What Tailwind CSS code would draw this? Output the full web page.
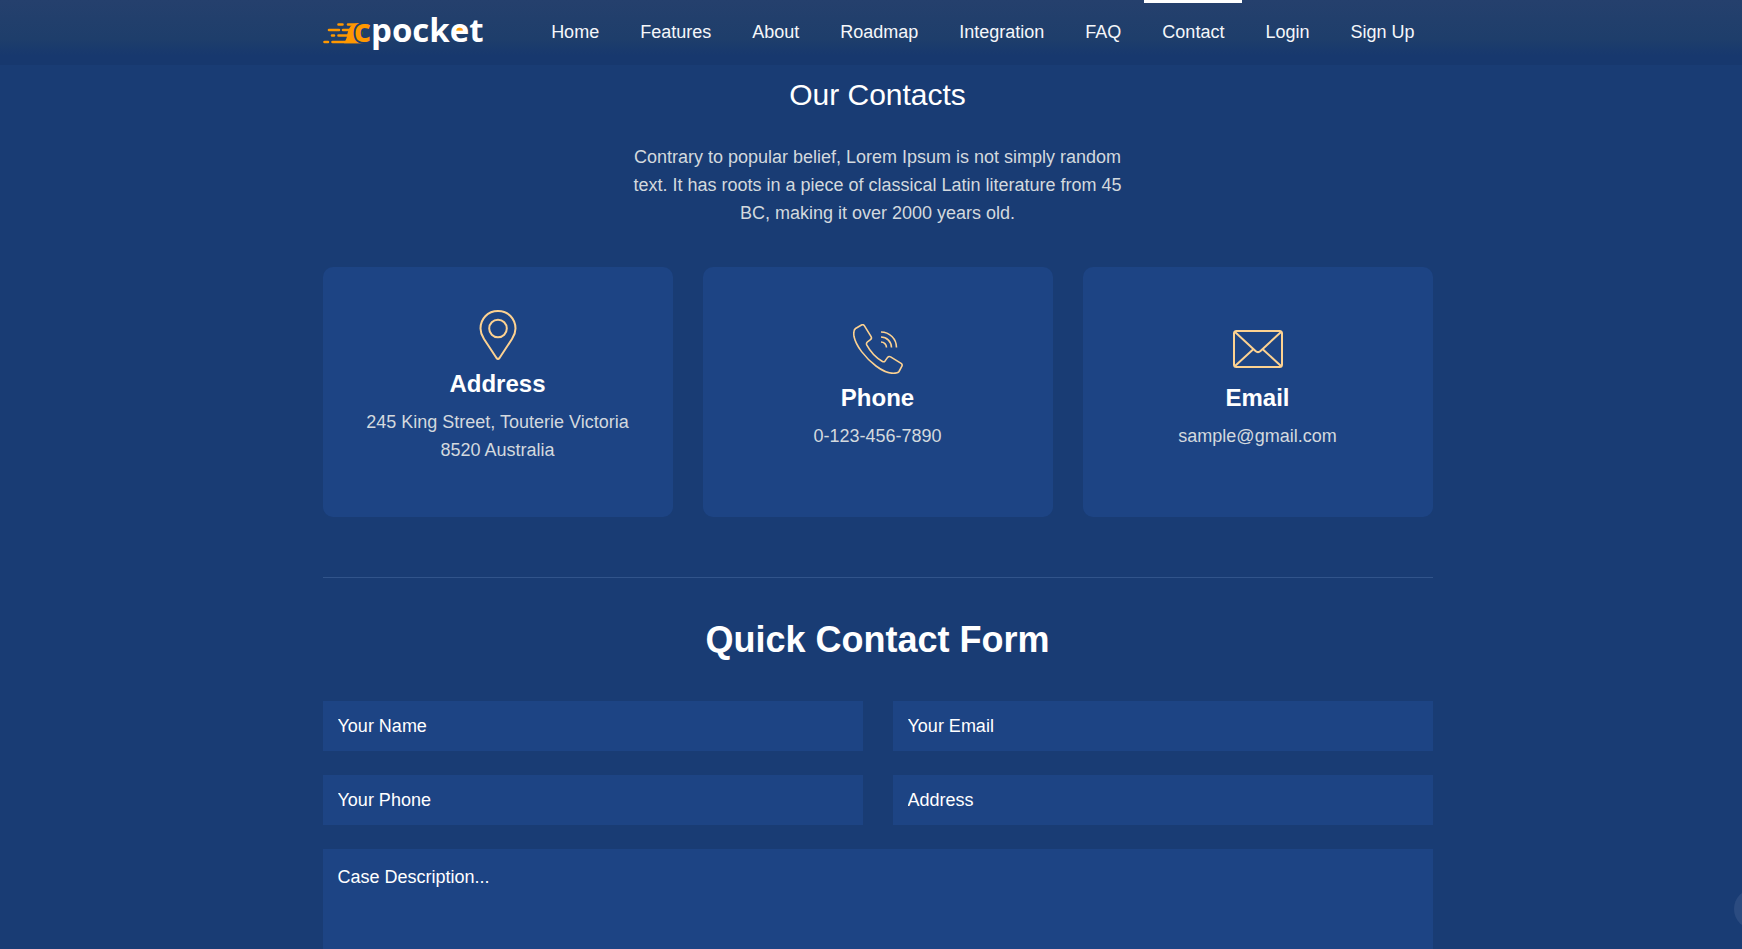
<!DOCTYPE html>
<html lang="en">
<head>
<meta charset="utf-8">
<meta name="viewport" content="width=device-width, initial-scale=1">
<title>cpocket – Contact</title>
<script src="https://cdn.jsdelivr.net/npm/@tailwindcss/browser@4"></script>
</head>
<body class="overflow-x-hidden bg-[#193c74] font-['Liberation_Sans',Arial,sans-serif] text-lg text-white">

<header class="fixed inset-x-0 top-0 z-10 bg-linear-to-b from-[#25406d] via-[#1e3e6b] via-60% to-[#17386e] to-85% pl-[13px]">
  <div class="mx-auto flex h-[65px] max-w-[1140px] items-center justify-between px-[15px]">
    <a href="#" aria-label="cpocket" class="block">
      <svg width="168" height="60" viewBox="0 -10 168 60" font-family="'Open Sans','Noto Sans',sans-serif" font-weight="700">
        <g stroke="#ff9800" stroke-linecap="round" stroke-width="2.6" fill="none">
          <path d="M15.500 11.500h4M25 11.500h12M6 17h10M20 17h14M9 22.500h2M15.500 22.500h14M1.500 29h3.500M9.500 29h28"/>
        </g>
        <path d="M40 10.200H34Q28 11 26 16T24 23T21 30.300H40z" fill="#ff9800"/>
        <text x="31" y="29" font-size="33" fill="#ff9800" stroke="#1f3e6c" stroke-width="4" paint-order="stroke">c</text>
        <path d="M131 18.500q1-6.500 6-6.500t6 6.500z" fill="#ff9800"/>
        <text x="48" y="29" font-size="33" fill="#fff">pocket</text>
      </svg>
    </a>
    <nav class="flex h-full gap-[5px] text-[#f5f7fa]">
      <a href="#" class="flex items-center border-t-3 border-transparent px-[18px] pb-[5px]">Home</a>
      <a href="#" class="flex items-center border-t-3 border-transparent px-[18px] pb-[5px]">Features</a>
      <a href="#" class="flex items-center border-t-3 border-transparent px-[18px] pb-[5px]">About</a>
      <a href="#" class="flex items-center border-t-3 border-transparent px-[18px] pb-[5px]">Roadmap</a>
      <a href="#" class="flex items-center border-t-3 border-transparent px-[18px] pb-[5px]">Integration</a>
      <a href="#" class="flex items-center border-t-3 border-transparent px-[18px] pb-[5px]">FAQ</a>
      <a href="#" aria-current="page" class="flex items-center border-t-3 border-white px-[18px] pb-[5px]">Contact</a>
      <a href="#" class="flex items-center border-t-3 border-transparent px-[18px] pb-[5px]">Login</a>
      <a href="#" class="flex items-center border-t-3 border-transparent px-[18px] pb-[5px]">Sign Up</a>
    </nav>
  </div>
</header>

<main class="pl-[13px]">
  <div class="mx-auto max-w-[1140px] px-[15px] pt-[77px] pb-20">
    <section class="text-center">
      <h1 class="text-3xl leading-9">Our Contacts</h1>
      <p class="mx-auto mt-[30px] max-w-[510px] leading-7 text-[#d3d9de]">Contrary to popular belief, Lorem Ipsum is not simply random text. It has roots in a piece of classical Latin literature from 45 BC, making it over 2000 years old.</p>

      <div class="mt-10 grid grid-cols-3 gap-[30px]">
        <article class="flex min-h-[250px] flex-col items-center justify-center rounded-[10px] bg-[#1d4484] px-[30px]">
          <svg width="50" height="50" viewBox="0 0 50 50" fill="none" stroke="#fdd291" stroke-width="2" stroke-linejoin="round">
            <path d="M25 1C14.500 1 7.500 9 7.500 18.500c0 4 1.500 7.500 3.500 10.500l12.500 19q1.500 1.800 3 0l12.500-19c2-3 3.500-6.500 3.500-10.500C42.500 9 35.500 1 25 1z"/>
            <circle cx="25" cy="18.500" r="8.800"/>
          </svg>
          <h2 class="py-[10px] text-2xl leading-7 font-bold">Address</h2>
          <p class="mb-[10px] max-w-[280px] leading-7 text-[#d3d9de]">245 King Street, Touterie Victoria 8520 Australia</p>
        </article>
        <article class="flex min-h-[250px] flex-col items-center justify-center rounded-[10px] bg-[#1d4484] px-[30px]">
          <svg width="50" height="50" viewBox="0 0 50 50" fill="none" stroke="#fdd291" stroke-width="1.600" stroke-linejoin="round">
            <path d="M2.500 4.500L8.500 1q1.800-.9 2.800.6l6.800 11q1 1.800-.6 3l-3 2.200q-1.500 1.200-.8 3C17 27 22 33 29.500 37.500q1.500.8 2.600-.6l2.500-3.500q1.200-1.500 3-.5l10.500 6.500q1.600 1 .8 2.800L46 47.500q-.6 1-1.800 1.300C38 50.500 31 48 23 42 12 33.500 3 22 1 12.500.5 9 .8 5.800 2.500 4.500z"/>
            <path d="M28 18a5.500 5.500 0 0 1 5.500 5.500M28 13a10.500 10.500 0 0 1 10.500 10.500M28 8a15.500 15.500 0 0 1 15.500 15.500"/>
          </svg>
          <h2 class="py-[10px] text-2xl leading-7 font-bold">Phone</h2>
          <p class="mb-[10px] leading-7 text-[#d3d9de]">0-123-456-7890</p>
        </article>
        <article class="flex min-h-[250px] flex-col items-center justify-center rounded-[10px] bg-[#1d4484] px-[30px]">
          <svg width="50" height="50" viewBox="0 0 50 50" fill="none" stroke="#fdd291" stroke-width="2" stroke-linejoin="round">
            <rect x="1" y="7" width="48" height="36" rx="2.500"/>
            <path d="M2 8l20.500 19q2.500 2.300 5 0L48 8M2 42l18-16.500M48 42L30 25.500"/>
          </svg>
          <h2 class="py-[10px] text-2xl leading-7 font-bold">Email</h2>
          <p class="mb-[10px] leading-7 text-[#d3d9de]">sample@gmail.com</p>
        </article>
      </div>
    </section>

    <hr class="mt-[60px] border-t border-[#31548b]">

    <section>
      <h2 class="mt-10 text-center text-4xl leading-[44px] font-bold">Quick Contact Form</h2>
      <form class="mt-[39px] grid grid-cols-2 gap-x-[30px] gap-y-6">
        <input type="text" aria-label="Your Name" placeholder="Your Name" class="h-[50px] w-full bg-[#1d4484] px-[15px] placeholder:text-white">
        <input type="email" aria-label="Your Email" placeholder="Your Email" class="h-[50px] w-full bg-[#1d4484] px-[15px] placeholder:text-white">
        <input type="tel" aria-label="Your Phone" placeholder="Your Phone" class="h-[50px] w-full bg-[#1d4484] px-[15px] placeholder:text-white">
        <input type="text" aria-label="Address" placeholder="Address" class="h-[50px] w-full bg-[#1d4484] px-[15px] placeholder:text-white">
        <textarea aria-label="Case Description" placeholder="Case Description..." class="col-span-2 h-[180px] resize-none bg-[#1d4484] px-[15px] py-[14px] leading-7 placeholder:text-white"></textarea>
      </form>
    </section>
  </div>
</main>

<button type="button" aria-label="Back to top" class="fixed -right-8 bottom-5 size-10 rounded-full bg-[#2b4b80]"></button>
</body>
</html>
